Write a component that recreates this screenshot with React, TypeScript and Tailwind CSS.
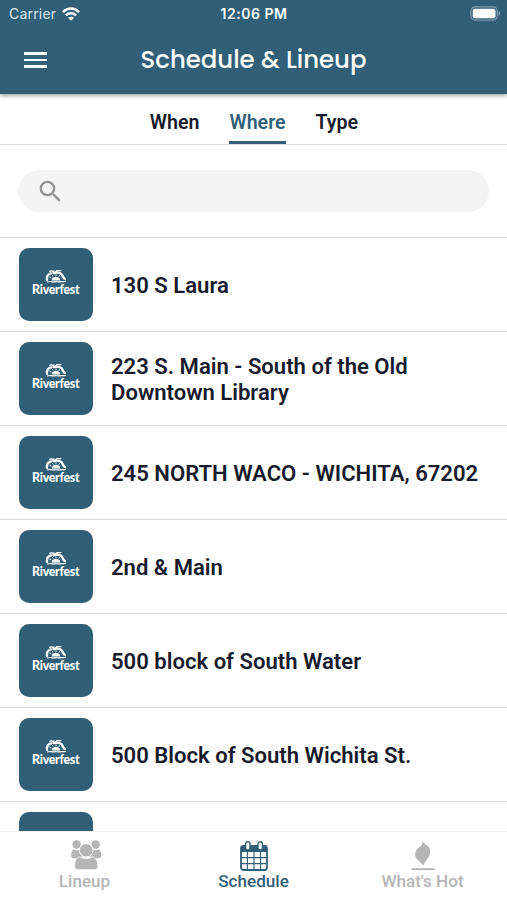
const venues = [
  '130 S Laura',
  '223 S. Main - South of the Old Downtown Library',
  '245 NORTH WACO - WICHITA, 67202',
  '2nd & Main',
  '500 block of South Water',
  '500 Block of South Wichita St.',
]

function WifiIcon() {
  return (
    <svg viewBox="0 0 18 14" className="h-[14px] w-[18px]" fill="none" stroke="currentColor" strokeWidth="2.5">
      <path d="M.9 5.1C5.5.4 12.5.4 17.1 5.1" />
      <path d="M3.9 8.4c2.9-2.8 7.3-2.8 10.2 0" />
      <path d="M9 13.8 6 10.8c1.7-1.5 4.3-1.5 6 0Z" fill="currentColor" stroke="none" />
    </svg>
  )
}

function BatteryIcon() {
  return (
    <svg viewBox="0 0 31 15" className="h-[15px] w-[31px]" fill="none">
      <rect x=".9" y=".9" width="26.4" height="13.2" rx="4" stroke="#7f9bae" strokeWidth="1.2" />
      <rect x="2.7" y="2.7" width="22.8" height="9.6" rx="2" fill="white" />
      <path d="M28.7 5v5c1.9-.8 1.9-4.2 0-5Z" fill="#91a9b9" />
    </svg>
  )
}

function SearchIcon() {
  return (
    <svg viewBox="0 0 24 24" className="h-[29px] w-[29px]" fill="#929292">
      <path d="M15.5 14h-.79l-.28-.27A6.47 6.47 0 0 0 16 9.5 6.5 6.5 0 1 0 9.5 16c1.61 0 3.09-.59 4.23-1.57l.27.28v.79l5 4.99L20.49 19l-4.99-5zm-6 0C7.01 14 5 11.99 5 9.5S7.01 5 9.5 5 14 7.01 14 9.5 11.99 14 9.5 14z" />
    </svg>
  )
}

function RiverfestLogo() {
  return (
    <div className="flex h-[73.5px] w-[73.5px] shrink-0 flex-col items-center rounded-[10px] bg-[#315f78] pt-[22px] text-white">
      <svg viewBox="0 0 22 13" className="h-[13px] w-[22px] shrink-0" fill="none" stroke="white" strokeLinecap="round">
        <path d="M2 9.8C1.5 6.6 3 4.2 6 3.4" strokeWidth="2.4" />
        <path d="M4.6 1.4c1.7-1.2 2.8.4 4.4-.3M11 1.4c1.6-1.5 3.2-.3 4.8-1" strokeWidth="1.4" />
        <path d="M8.5 3c4-1 8.2-.1 9.2 3.2.4 1.3.9 2.2 2.2 2.8" strokeWidth="2.4" />
        <path d="m4.8 7.3 1.2.5M7.3 5.2l.6.9M11 4.7v.7M14.5 5.6l-.5.8" strokeWidth="1" />
        <path d="M6.7 10.4C6.7 5.6 15.3 5.6 15.3 10.4Z" fill="white" stroke="none" />
        <path d="M2.6 12c2-1.3 4.2.2 6.4-.2 2.1-.6 3.5.4 5.5 0 1.8-.5 3.7.1 6.1-.5" strokeWidth="1.2" />
      </svg>
      <span className="mt-[-1px] font-['Lato','Open_Sans',sans-serif] text-[12.4px] leading-[16px] font-black tracking-[-0.3px]">
        Riverfest
      </span>
    </div>
  )
}

function LineupIcon() {
  return (
    <svg viewBox="0 0 34 32" className="h-8 w-[34px]" fill="#b5b5b5">
      <circle cx="7.7" cy="5.5" r="4.2" />
      <circle cx="26.7" cy="5.5" r="4.2" />
      <path d="M4.5 10.3c2 1.4 4.8 1.4 6.5.1 0 4 1.3 5.7 3.2 7-3 .3-4.6.9-5.9 2-3-.3-6-.5-6.1-2-.1-3 .4-5.5 2.3-7.1ZM29.9 10.3c-2 1.4-4.8 1.4-6.5.1 0 4-1.3 5.7-3.2 7 3 .3 4.6.9 5.9 2 3-.3 6-.5 6.1-2 .1-3-.4-5.5-2.3-7.1Z" />
      <circle cx="17.2" cy="11.3" r="6.8" stroke="white" strokeWidth="1" />
      <path d="M11 17.7c3.7 2.5 8.7 2.5 12.4 0 3.8 1.1 5.2 4.3 5.4 9.5 0 2.5-1 3.5-4 3.5H9.6c-3 0-4-1-4-3.5.2-5.2 1.6-8.4 5.4-9.5Z" stroke="white" strokeWidth=".7" />
    </svg>
  )
}

function CalendarIcon() {
  return (
    <svg viewBox="0 0 28 30" className="h-[30px] w-7" fill="none">
      <rect x="1" y="5" width="26" height="24" rx="2.5" fill="white" stroke="#315f78" strokeWidth="1.8" />
      <path d="M1 11V7a2 2 0 0 1 2-2h22a2 2 0 0 1 2 2v4Z" fill="#315f78" />
      <path d="M1 16.6h26M1 22.6h26M7.4 10v19M14 10v19M20.6 10v19" stroke="#315f78" strokeWidth="1.1" />
      <rect x="5.6" y=".8" width="4.4" height="8.2" rx="2.1" fill="white" stroke="#315f78" strokeWidth="1.4" />
      <rect x="18" y=".8" width="4.4" height="8.2" rx="2.1" fill="white" stroke="#315f78" strokeWidth="1.4" />
    </svg>
  )
}

function FlameIcon() {
  return (
    <svg viewBox="0 0 24 30" className="h-[30px] w-6" fill="#b5b5b5">
      <path d="M11.6 0C12.8 4.2 19 3.5 19.2 10.2 19.4 16.6 14.4 18.6 12.7 24.6 10.7 22.5 8.6 20.8 6.5 18.7 3.6 15.8 3.3 12.2 5.4 9.2 8 6 11.6 5.2 11.6 0Z" />
      <path d="M.5 27.2h23v1.9H.5Z" />
    </svg>
  )
}

const navItems = [
  { label: 'Lineup', icon: <LineupIcon />, active: false },
  { label: 'Schedule', icon: <CalendarIcon />, active: true },
  { label: "What's Hot", icon: <FlameIcon />, active: false },
]

export default function App() {
  return (
    <div className="flex h-[900px] w-full flex-col overflow-hidden bg-white font-['Roboto',sans-serif] text-[#171b2b]">
      {/* Header */}
      <header className="relative z-10 h-[94px] shrink-0 bg-[#315f78] text-white shadow-[0_2px_4px_rgba(0,0,0,0.35)]">
        <div className="grid h-[27px] grid-cols-[1fr_auto_1fr] items-center pr-[6px] pl-[9px] font-['Inter',sans-serif] text-[14px]">
          <div className="flex items-center gap-[6px]">
            <span className="tracking-[0.2px] text-[#dce8ef]">Carrier</span>
            <WifiIcon />
          </div>
          <span className="-ml-[2px] text-center text-[14px] font-semibold tracking-[0.5px]">12:06 PM</span>
          <div className="flex justify-end">
            <BatteryIcon />
          </div>
        </div>
        <div className="grid h-[66px] grid-cols-[48px_1fr_48px] items-center">
          <button aria-label="Menu" className="flex flex-col gap-[4px] pl-6">
            <span className="h-[2.5px] w-[23px] bg-white" />
            <span className="h-[2.5px] w-[23px] bg-white" />
            <span className="h-[2.5px] w-[23px] bg-white" />
          </button>
          <h1 className="text-center font-['Poppins','Inter',sans-serif] text-[24.4px] font-medium">Schedule &amp; Lineup</h1>
        </div>
      </header>

      {/* Tabs */}
      <nav className="flex h-[51px] shrink-0 justify-center gap-[30px] border-b border-[#dedede] pl-px text-[19.6px] font-semibold">
        <button className="pt-[7px]">When</button>
        <button className="border-b-[3px] border-[#315f78] pt-[10px] text-[#315f78]">Where</button>
        <button className="pt-[7px]">Type</button>
      </nav>

      {/* Search */}
      <div className="h-[92px] shrink-0 px-[18px] pt-[25px]">
        <div className="flex h-[42px] items-center rounded-full bg-[#f4f4f4] pl-[18px]">
          <SearchIcon />
        </div>
      </div>

      {/* Venue list */}
      <main className="min-h-0 flex-1 overflow-hidden">
        {venues.map((venue) => (
          <div key={venue} className="flex h-[94px] items-center gap-[18.5px] border-t border-[#dadada] pr-4 pl-[19px]">
            <RiverfestLogo />
            <span className="pt-[2px] text-[22.08px] leading-[26px] font-semibold">{venue}</span>
          </div>
        ))}
        {/* Next row peeks out above the bottom bar */}
        <div className="h-[94px] border-t border-[#dadada] pt-[10px] pl-[19px]">
          <div className="h-[73.5px] w-[73.5px] rounded-[10px] bg-[#315f78]" />
        </div>
      </main>

      {/* Bottom navigation */}
      <footer className="grid h-[69px] shrink-0 grid-cols-3 border-t border-[#f0f0f0] bg-white">
        {navItems.map((item) => (
          <button
            key={item.label}
            className={item.active ? 'flex flex-col items-center text-[#315f78]' : 'flex flex-col items-center text-[#b5b5b5]'}
          >
            <span className={item.label === 'Lineup' ? 'flex h-[39px] items-end pl-[2px]' : 'flex h-[39px] items-end'}>
              {item.icon}
            </span>
            <span className="pt-px text-[17.1px] leading-[18px] font-medium">{item.label}</span>
          </button>
        ))}
      </footer>
    </div>
  )
}
